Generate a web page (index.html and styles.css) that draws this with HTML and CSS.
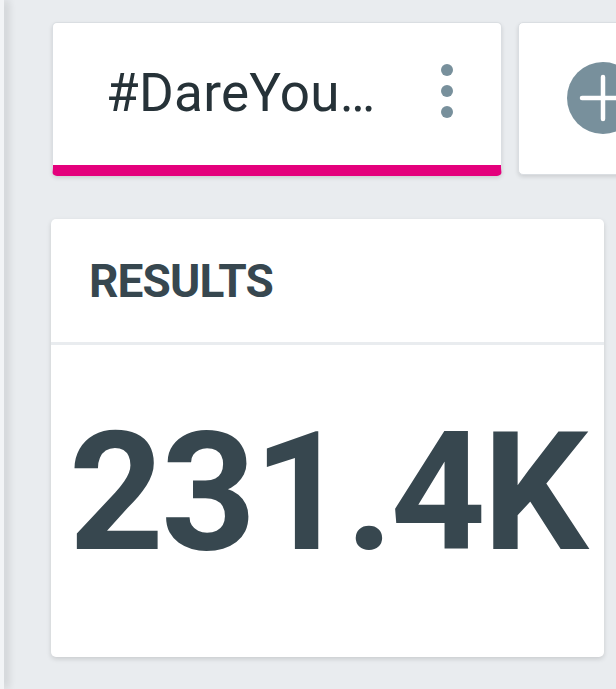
FILE: index.html
```html
<!DOCTYPE html>
<html lang="en">
<head>
  <meta charset="UTF-8">
  <meta name="viewport" content="width=device-width, initial-scale=1.0">
  <title>Campaign results</title>
  <link rel="stylesheet" href="styles.css">
</head>
<body>
  <div class="rail"></div>
  <main class="board">
    <div class="tabs">
      <div class="tab active">
        <span class="tab-name">#DareYou…</span>
        <!-- kebab menu -->
        <svg class="tab-menu" width="12" height="54" viewBox="0 0 12 54">
          <circle cx="6" cy="6" r="6"/>
          <circle cx="6" cy="27" r="6"/>
          <circle cx="6" cy="48" r="6"/>
        </svg>
      </div>
      <div class="tab add">
        <svg class="add-icon" width="72" height="72" viewBox="0 0 72 72">
          <circle cx="36" cy="36" r="36" fill="#78909c"/>
          <path d="M36 15v42M15 36h42" stroke="#fff" stroke-width="4.5" stroke-linecap="round"/>
        </svg>
      </div>
    </div>

    <section class="card">
      <h2 class="card-title">RESULTS</h2>
      <div class="card-value">231.4K</div>
    </section>
  </main>
</body>
</html>
```

FILE: styles.css
```css
* {
  margin: 0;
  padding: 0;
  box-sizing: border-box;
}
body {
  font-family: Roboto, 'Liberation Sans', sans-serif;
  background-color: #e9ecef;
  display: flex;
  height: 100vh;
  overflow: hidden;
}
.rail {
  width: 4px;
  flex-shrink: 0;
  background: #f2f4f6;
  box-shadow: 3px 0 9px rgba(0,0,0,0.22);
  z-index: 1;
}
.board {
  flex: 1;
  min-width: 0;
  overflow: hidden;
  padding: 22px 0 0 48px;
}
.tabs {
  display: flex;
  gap: 16px;
}
.tab {
  flex-shrink: 0;
  width: 450px;
  height: 154px;
  background: white;
  border: 1px solid #dadee2;
  border-radius: 5px;
  box-shadow: 0 2px 4px rgba(0,0,0,0.12);
  display: flex;
  align-items: center;
  overflow: hidden;
}
.tab.active {
  border-bottom: 11px solid #e4007c;
  padding: 0 48px 0 53px;
}
.tab.add {
  height: 153px;
  padding-left: 48px;
}
.tab-name {
  font-size: 53px;
  line-height: 1;
  color: #263238;
  white-space: nowrap;
  letter-spacing: 0.3px;
  margin-top: -2px;
}
.tab-menu {
  margin-left: auto;
  fill: #78909c;
  margin-top: -6px;
}
.add-icon {
  margin-top: -2px;
}
.card {
  width: 553px;
  margin: 43px 0 0 -1px;
  background: white;
  border-radius: 5px;
  box-shadow: 0 2px 5px rgba(0,0,0,0.14);
  color: #37474f;
}
.card-title {
  height: 126px;
  padding: 35px 0 0 38px;
  border-bottom: 3px solid #e9ecef;
  font-size: 46px;
  font-weight: bold;
  line-height: 54px;
  letter-spacing: -0.9px;
}
.card-value {
  height: 312px;
  padding: 48px 0 0 2px;
  text-align: center;
  font-size: 166px;
  font-weight: bold;
  line-height: 1.2;
  letter-spacing: -3px;
  text-indent: -3px;
}
```
